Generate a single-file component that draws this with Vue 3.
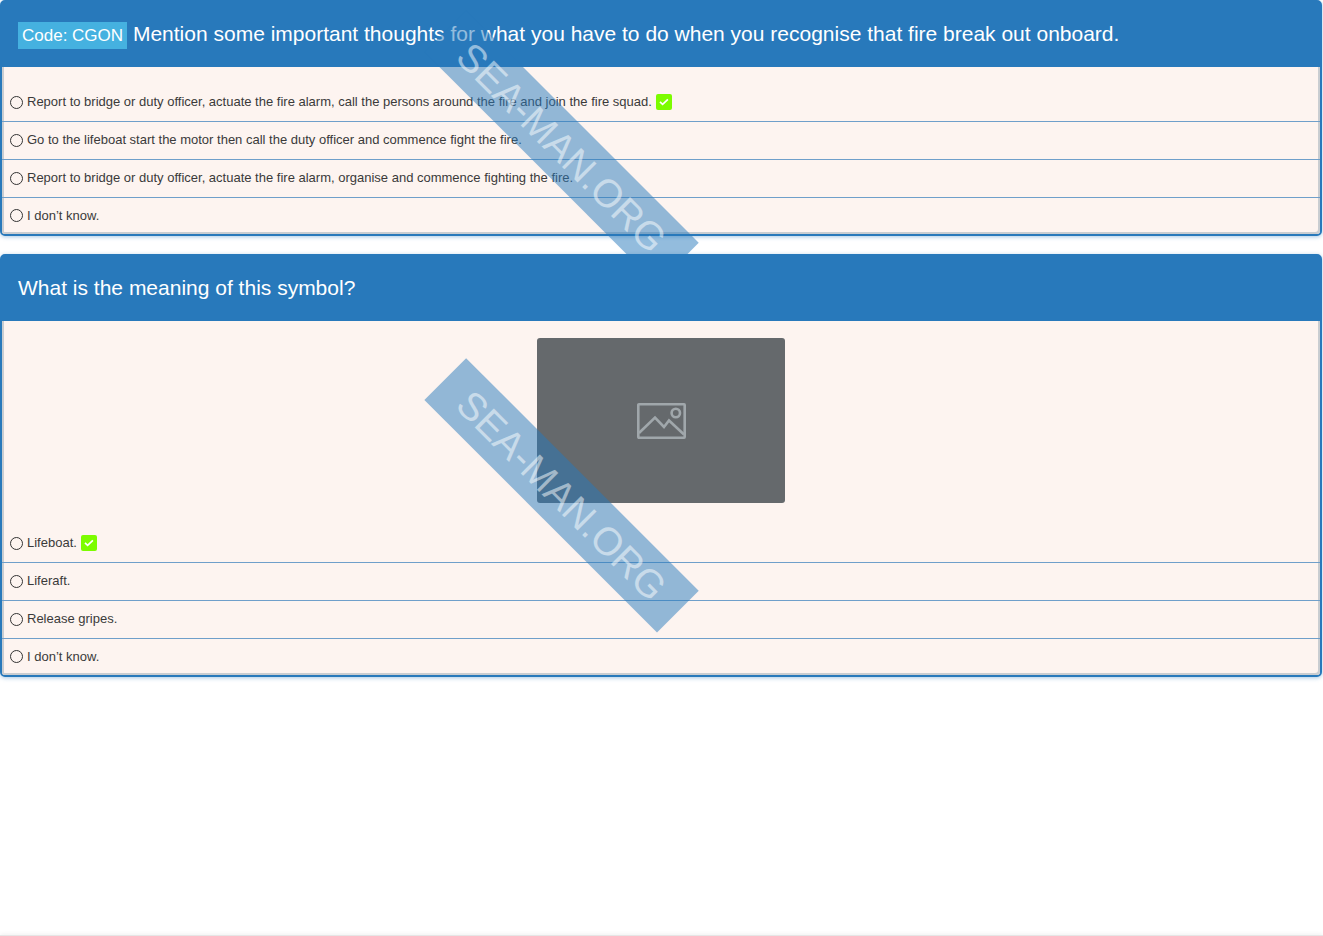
<template>
  <main class="pagina">
    <section v-for="(q, i) in questions" :key="i" class="card">
      <h2 :id="'question-' + i" class="title">
        <span v-if="q.code" class="code">Code: {{ q.code }}</span>
        {{ q.title }}
      </h2>

      <div class="body" role="radiogroup" :aria-labelledby="'question-' + i">
        <div v-if="q.image" class="picture">
          <svg width="49" height="36" viewBox="0 0 49 36" fill="none" stroke="#a0a7ab" stroke-width="2.6" aria-hidden="true">
            <rect x="1.3" y="1.3" width="46.4" height="33.4" rx="0.6" />
            <path d="M2 30 18 14.5 27 24 32 17.5 47 31.5" />
            <circle cx="38.8" cy="10" r="4.2" />
          </svg>
        </div>

        <ul class="answers">
          <li v-for="(a, j) in q.answers" :key="j" class="answer">
            <input :id="`answer-${i}-${j}`" v-model="selected[i]" type="radio" :name="'question-' + i" :value="j" />
            <label :for="`answer-${i}-${j}`">{{ a }}</label>
            <svg v-if="j === q.correct" class="check" width="16" height="16" viewBox="0 0 16 16" aria-hidden="true">
              <rect width="16" height="16" rx="2" fill="#7cfc00" />
              <path d="m4 7.9 2.6 2.5 5.3-5.1" fill="none" stroke="#fff" stroke-width="1.7" />
            </svg>
          </li>
        </ul>
      </div>

      <div class="watermark" aria-hidden="true">SEA-MAN.ORG</div>
    </section>

    <footer class="bottom"></footer>
  </main>
</template>

<script setup>
import { ref } from 'vue'

const questions = [
  {
    code: 'CGON',
    title: 'Mention some important thoughts for what you have to do when you recognise that fire break out onboard.',
    answers: [
      'Report to bridge or duty officer, actuate the fire alarm, call the persons around the fire and join the fire squad.',
      'Go to the lifeboat start the motor then call the duty officer and commence fight the fire.',
      'Report to bridge or duty officer, actuate the fire alarm, organise and commence fighting the fire.',
      'I don’t know.'
    ],
    correct: 0
  },
  {
    title: 'What is the meaning of this symbol?',
    image: true,
    answers: ['Lifeboat.', 'Liferaft.', 'Release gripes.', 'I don’t know.'],
    correct: 0
  }
]

const selected = ref([null, null])
</script>

<style>
body { background:#fff; overflow-x:hidden; }
</style>

<style scoped>
.pagina {
  display:flex; flex-direction:column; gap:18px; min-height:100vh;
  font-family:"Liberation Sans", Arial, sans-serif; color:#3a3a3a;
}
.card {
  position:relative; border:2px solid #2879bb; border-radius:5px;
  margin-right:1px; background:#2879bb; box-shadow:0 1px 4px rgba(40,121,187,0.4);
}
.title {
  margin:0; padding:16px 16px 17px; font-size:21px; line-height:32px; font-weight:400; color:#fff;
}
.code {
  display:inline-block; padding:0 4px; background:#45b1e0; font-size:17px; line-height:27px;
}
.body {
  padding-top:17px; background:#fdf4f0; border-radius:0 0 3px 3px;
  box-shadow:inset 2px 0 #c9cdd1, inset -2px -2px #c9cdd1;
}
.picture {
  display:flex; align-items:center; justify-content:center;
  width:248px; height:165px; margin:0 auto 22px; border-radius:3px; background:#65696c;
}
.answers { list-style:none; margin:0; padding:0; }
.answer {
  display:flex; align-items:center; gap:4px; min-height:36px; padding:0 8px 1px;
  border-bottom:1px solid #6f9fca; font-size:13px; line-height:20px;
}
.answer:last-child { min-height:35px; border-bottom:none; }
input {
  appearance:none; width:13px; height:13px; margin:0; flex:none;
  border:1px solid #333; border-radius:50%;
}
input:checked { background:#2879bb; }
.check { flex:none; }
.watermark {
  position:absolute; top:50%; left:30%; z-index:1; padding:8px 26px;
  background:rgba(40,121,187,0.5); color:rgba(255,255,255,0.5);
  font-size:39px; line-height:43px;
  transform:rotate(45deg); pointer-events:none; white-space:nowrap;
}
.card + .card { z-index:2; }
.bottom { height:1px; margin-top:auto; background:#e6e6e6; box-shadow:0 0 4px rgba(0,0,0,0.2); }
</style>
